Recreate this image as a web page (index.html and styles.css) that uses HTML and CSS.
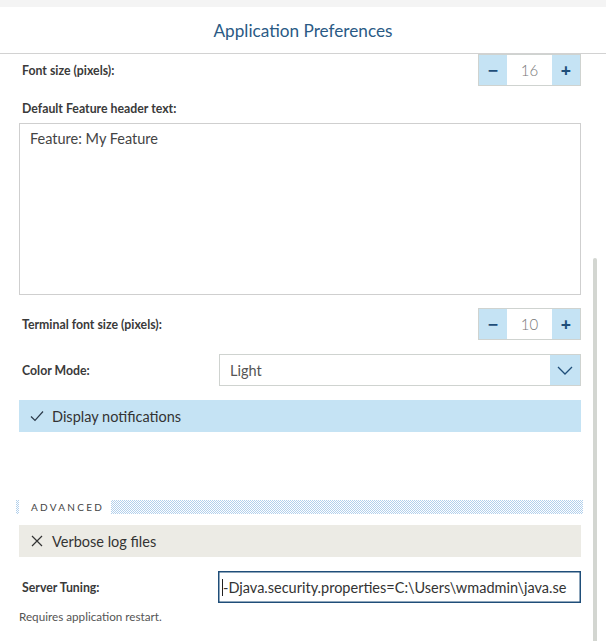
FILE: index.html
```html
<!DOCTYPE html>
<html lang="en">
<head>
  <meta charset="UTF-8" />
  <meta name="viewport" content="width=device-width, initial-scale=1.0" />
  <title>Application Preferences</title>
  <link rel="stylesheet" href="styles.css">
</head>
<body>
  <div class="topbar"></div>
  <header class="header">
    <h1>Application Preferences</h1>
  </header>

  <div class="scroller">
    <div class="prefs">
      <div class="row">
        <label class="label">Font size (pixels):</label>
        <div class="spinner">
          <button class="spin-btn">&minus;</button>
          <span class="spin-value">16</span>
          <button class="spin-btn">+</button>
        </div>
      </div>

      <label class="label block">Default Feature header text:</label>
      <div class="textarea">Feature: My Feature</div>

      <div class="row">
        <label class="label">Terminal font size (pixels):</label>
        <div class="spinner">
          <button class="spin-btn">&minus;</button>
          <span class="spin-value">10</span>
          <button class="spin-btn">+</button>
        </div>
      </div>

      <div class="row">
        <label class="label">Color Mode:</label>
        <div class="select">
          <span class="select-value">Light</span>
          <span class="select-btn">
            <svg width="16" height="9" viewBox="0 0 16 9"><path d="M1 1l7 7 7-7" fill="none" stroke="#1f4e79" stroke-width="1.3"/></svg>
          </span>
        </div>
      </div>

      <div class="toggle on">
        <svg width="14" height="12" viewBox="0 0 14 12"><path d="M1 6.5l4 4L13 1.5" fill="none" stroke="#2b3a4a" stroke-width="1.2"/></svg>
        <span>Display notifications</span>
      </div>

      <div class="section-head">
        <svg class="dots" width="100%" height="14">
          <defs>
            <pattern id="checker" width="2" height="2" patternUnits="userSpaceOnUse">
              <rect x="0" y="0" width="1" height="1" fill="#b2d0ec"/>
              <rect x="1" y="1" width="1" height="1" fill="#b2d0ec"/>
            </pattern>
          </defs>
          <rect width="100%" height="14" fill="url(#checker)" shape-rendering="crispEdges"/>
        </svg>
        <span class="section-title">ADVANCED</span>
      </div>

      <div class="toggle off">
        <svg width="12" height="12" viewBox="0 0 12 12"><path d="M1 1l10 10M11 1L1 11" fill="none" stroke="#333" stroke-width="1.2"/></svg>
        <span>Verbose log files</span>
      </div>

      <div class="row">
        <label class="label">Server Tuning:</label>
        <div class="text-input focused"><span class="caret">-Djava.security.properties=C:\Users\wmadmin\java.se</span></div>
      </div>
      <p class="hint">Requires application restart.</p>
    </div>

    <div class="scrollbar"><div class="thumb"></div></div>
  </div>
</body>
</html>
```

FILE: styles.css
```css
body {
  font-family: Lato, "Noto Sans", sans-serif;
  margin: 0;
  background: #fff;
  color: #333;
  height: 641px;
  overflow: hidden;
}
.topbar {
  height: 7px;
  background: #f4f4f4;
}
.header {
  height: 46px;
  border-bottom: 1px solid #d2d2d2;
  display: flex;
  align-items: center;
  justify-content: center;
}
.header h1 {
  margin: 0;
  font-size: 17.2px;
  font-weight: 400;
  color: #2a5a85;
}
.scroller {
  display: flex;
}
.prefs {
  flex: 1;
  padding: 0 7px 0 19px;
}
.scrollbar {
  width: 18px;
  padding-top: 204px;
}
.thumb {
  margin-left: 5px;
  width: 4px;
  height: 400px;
  background: #d3d6d1;
  border-radius: 2px 2px 0 0;
}
.row {
  display: flex;
  align-items: center;
  justify-content: space-between;
  margin-bottom: 14px;
}
.label {
  font-size: 12.3px;
  font-weight: 700;
  color: #3a3a3a;
  padding-left: 3px;
}
.label.block {
  display: block;
  margin: 10px 0 5px;
  line-height: 18px;
}
.spinner {
  display: flex;
  height: 30px;
  border: 1px solid #cfd3d0;
}
.spin-btn {
  width: 28px;
  border: none;
  background: #c5e3f4;
  color: #1f4e79;
  font-family: "Noto Sans", sans-serif;
  font-size: 18px;
  font-weight: 700;
  padding: 0;
  line-height: 1;
}
.spin-value {
  width: 45px;
  display: flex;
  align-items: center;
  justify-content: center;
  font-size: 15px;
  font-weight: 300;
  color: #777;
  background: #fff;
}
.textarea {
  height: 154px;
  border: 1px solid #cfcfcf;
  padding: 6px 10px 10px;
  font-size: 14.5px;
  color: #444;
  margin-bottom: 13px;
}
.select {
  width: 360px;
  height: 30px;
  border: 1px solid #cfd3d0;
  display: flex;
}
.select-value {
  flex: 1;
  display: flex;
  align-items: center;
  padding-left: 10px;
  font-size: 14.5px;
  color: #555;
}
.select-btn {
  width: 30px;
  background: #c5e3f4;
  display: flex;
  align-items: center;
  justify-content: center;
}
.toggle {
  height: 32px;
  display: flex;
  align-items: center;
  gap: 8px;
  padding-left: 11px;
  font-size: 14.5px;
  color: #333;
}
.toggle.on {
  background: #c5e3f4;
  margin-bottom: 68px;
}
.toggle.off {
  background: #ecebe5;
  padding-left: 12px;
  margin-bottom: 14px;
}
.toggle.off svg {
  margin-right: 1px;
}
.section-head {
  position: relative;
  display: flex;
  align-items: center;
  margin: 0 -2px 11px -3px;
  height: 14px;
}
.section-head .dots {
  position: absolute;
  left: 0;
  top: 0;
}
.section-title {
  position: relative;
  margin-left: 3px;
  background: #fff;
  padding: 0 7px 0 12px;
  height: 14px;
  line-height: 14px;
  font-size: 10px;
  letter-spacing: 2.3px;
  color: #444;
}
.text-input {
  width: 348px;
  height: 30px;
  border: 1px solid #1f4e79;
  box-shadow: inset 0 0 0 0.5px #1f4e79;
  display: flex;
  align-items: center;
  padding-left: 3px;
  padding-right: 10px;
  white-space: nowrap;
  font-size: 14.5px;
  color: #333;
}
.caret {
  border-left: 1px solid #222;
}
.hint {
  margin: -8px 0 0;
  font-size: 11.7px;
  color: #555;
}
```
